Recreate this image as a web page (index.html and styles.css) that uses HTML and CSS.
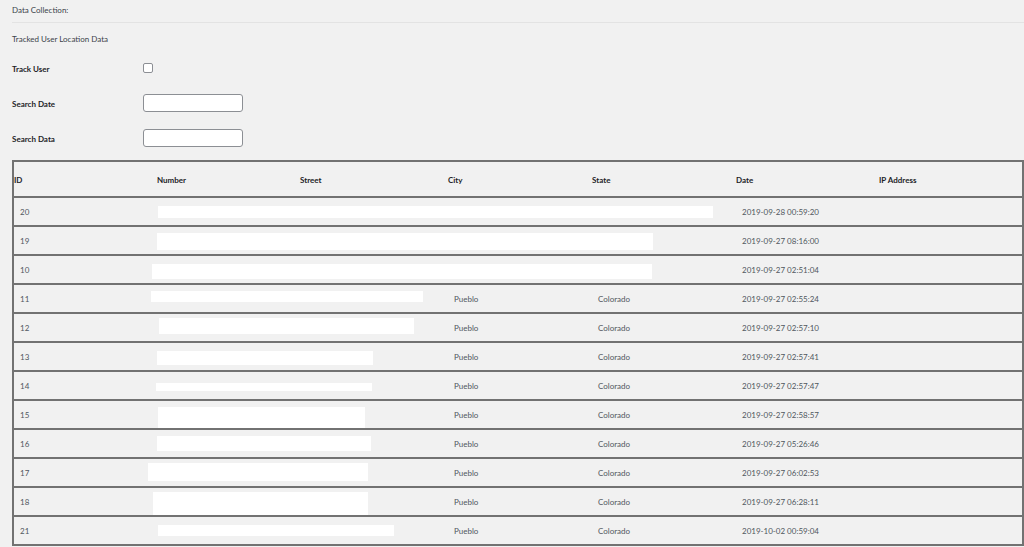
FILE: index.html
```html
<!DOCTYPE html>
<html>
<head>
  <title>Data Collection</title>
  <link rel="stylesheet" href="styles.css">
</head>
<body>

  <div class="wrap">
    <h2 class="page-title">Data Collection:</h2>
    <p class="subtitle">Tracked User Location Data</p>

    <div class="form-row short">
      <label class="label" for="track">Track User</label>
      <input type="checkbox" id="track" class="check">
    </div>
    <div class="form-row tall">
      <label class="label" for="sdate">Search Date</label>
      <input type="text" id="sdate" class="field">
    </div>
    <div class="form-row short">
      <label class="label" for="sdata">Search Data</label>
      <input type="text" id="sdata" class="field">
    </div>

    <table class="data-table">
      <colgroup>
        <col class="c-id"><col class="c-num"><col class="c-street"><col class="c-city">
        <col class="c-state"><col class="c-date"><col class="c-ip">
      </colgroup>
      <thead>
        <tr>
          <th>ID</th><th>Number</th><th>Street</th><th>City</th><th>State</th><th>Date</th><th>IP Address</th>
        </tr>
      </thead>
      <tbody id="rows"></tbody>
    </table>
  </div>

  <script>
    // redacted address boxes: [left offset from Number column, top offset in row, width, height]
    const rows = [
      { id: 20, box: [1, 8, 555, 12], city: '', state: '', date: '2019-09-28 00:59:20' },
      { id: 19, box: [0, 6, 496, 17], city: '', state: '', date: '2019-09-27 08:16:00' },
      { id: 10, box: [-5, 8, 500, 15], city: '', state: '', date: '2019-09-27 02:51:04' },
      { id: 11, box: [-6, 6, 272, 11], city: 'Pueblo', state: 'Colorado', date: '2019-09-27 02:55:24' },
      { id: 12, box: [2, 4, 255, 16], city: 'Pueblo', state: 'Colorado', date: '2019-09-27 02:57:10' },
      { id: 13, box: [0, 8, 216, 14], city: 'Pueblo', state: 'Colorado', date: '2019-09-27 02:57:41' },
      { id: 14, box: [-1, 11, 216, 8], city: 'Pueblo', state: 'Colorado', date: '2019-09-27 02:57:47' },
      { id: 15, box: [1, 6, 207, 21], city: 'Pueblo', state: 'Colorado', date: '2019-09-27 02:58:57' },
      { id: 16, box: [0, 6, 214, 15], city: 'Pueblo', state: 'Colorado', date: '2019-09-27 05:26:46' },
      { id: 17, box: [-9, 4, 220, 18], city: 'Pueblo', state: 'Colorado', date: '2019-09-27 06:02:53' },
      { id: 18, box: [-4, 4, 215, 23], city: 'Pueblo', state: 'Colorado', date: '2019-09-27 06:28:11' },
      { id: 21, box: [1, 8, 236, 11], city: 'Pueblo', state: 'Colorado', date: '2019-10-02 00:59:04' }
    ];

    const tbody = document.getElementById('rows');
    rows.forEach(function (r) {
      const tr = document.createElement('tr');
      const b = r.box;
      tr.innerHTML =
        '<td>' + r.id + '</td>' +
        '<td class="num"><div class="redact" style="margin-left:' + b[0] + 'px;margin-top:' + b[1] +
          'px;width:' + b[2] + 'px;height:' + b[3] + 'px"></div></td>' +
        '<td></td>' +
        '<td>' + r.city + '</td>' +
        '<td>' + r.state + '</td>' +
        '<td>' + r.date + '</td>' +
        '<td></td>';
      tbody.appendChild(tr);
    });
  </script>

</body>
</html>
```

FILE: styles.css
```css
body {
  margin: 0;
  background-color: #f1f1f1;
  font-family: Lato, "Open Sans", sans-serif;
  font-size: 8px;
  color: #3c434a;
}
.wrap {
  padding-left: 12px;
}
.page-title {
  margin: 0;
  font-size: 8px;
  font-weight: normal;
  line-height: 21px;
  height: 23px;
  box-sizing: border-box;
  border-bottom: 1px solid #e3e3e3;
}
.subtitle {
  margin: 0;
  line-height: 32px;
  height: 30px;
}
.form-row {
  display: flex;
  align-items: center;
}
.form-row.short {
  height: 30px;
}
.form-row.tall {
  height: 40px;
}
.label {
  width: 131px;
  padding-top: 2px;
  font-weight: bold;
  color: #1d2327;
}
.check {
  appearance: none;
  -webkit-appearance: none;
  margin: 0;
  width: 10px;
  height: 10px;
  background: #fff;
  border: 1px solid #8c8f94;
  border-radius: 2px;
}
.field {
  margin: 0;
  width: 100px;
  height: 18px;
  box-sizing: border-box;
  background: #fff;
  border: 1px solid #8c8f94;
  border-radius: 3px;
}
.data-table {
  margin-top: 7px;
  width: 1010px;
  table-layout: fixed;
  border-collapse: collapse;
  border: 2px solid #727272;
}
.c-id { width: 144px; }
.c-num { width: 143px; }
.c-street { width: 148px; }
.c-city { width: 144px; }
.c-state { width: 144px; }
.c-date { width: 143px; }
.c-ip { width: 144px; }
.data-table th {
  height: 33px;
  padding: 1px 0 0 0;
  text-align: left;
  font-weight: bold;
  color: #1d2327;
  border-bottom: 2px solid #727272;
}
.data-table td {
  height: 26px;
  padding: 1px 0 0 6px;
  color: #50575e;
  border-bottom: 2px solid #727272;
  white-space: nowrap;
}
.data-table td.num {
  padding: 0;
  vertical-align: top;
}
.redact {
  background: #fff;
}
```
